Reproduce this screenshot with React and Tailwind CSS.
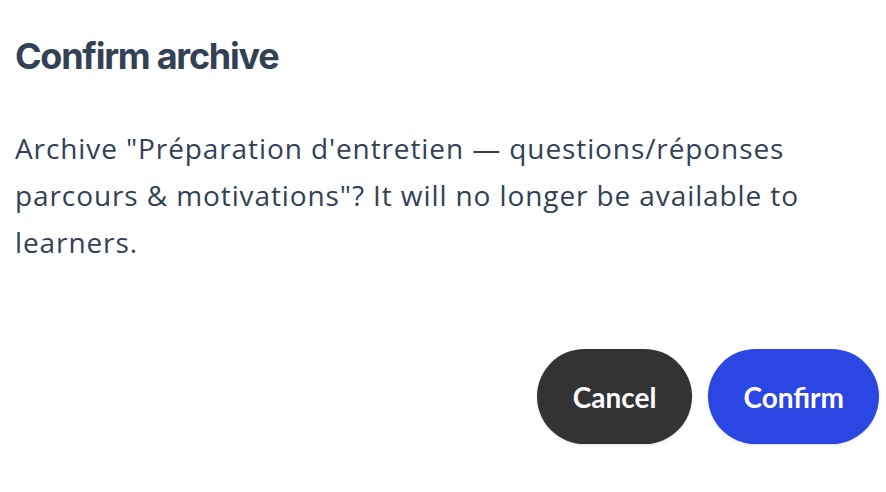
export default function App() {
  return (
    <div className="w-[886px] h-[492px] bg-white overflow-hidden">
      <div className="pl-[15px] pr-[7px] pt-[36px]">
        <h2 className="text-[36px] leading-[40px] font-bold tracking-[-0.035em] text-[#334155] [font-family:Inter,sans-serif]">
          Confirm archive
        </h2>
        <p className="mt-[49px] text-[28px] leading-[47px] tracking-[0.9px] text-[#334155] [font-family:'Open_Sans',sans-serif] whitespace-nowrap">
          Archive "Préparation d'entretien — questions/réponses
          <br />
          parcours &amp; motivations"? It will no longer be available to
          <br />
          learners.
        </p>
        <div className="mt-[83px] flex justify-end gap-[16px]">
          <button className="h-[95px] px-[36px] rounded-full bg-[#333333] text-white text-[28px] font-bold [font-family:Lato,sans-serif] shadow-sm">
            Cancel
          </button>
          <button className="h-[95px] px-[35px] rounded-full bg-[#2c46e3] text-white text-[28px] font-bold [font-family:Lato,sans-serif] shadow-sm">
            Confirm
          </button>
        </div>
      </div>
    </div>
  );
}
